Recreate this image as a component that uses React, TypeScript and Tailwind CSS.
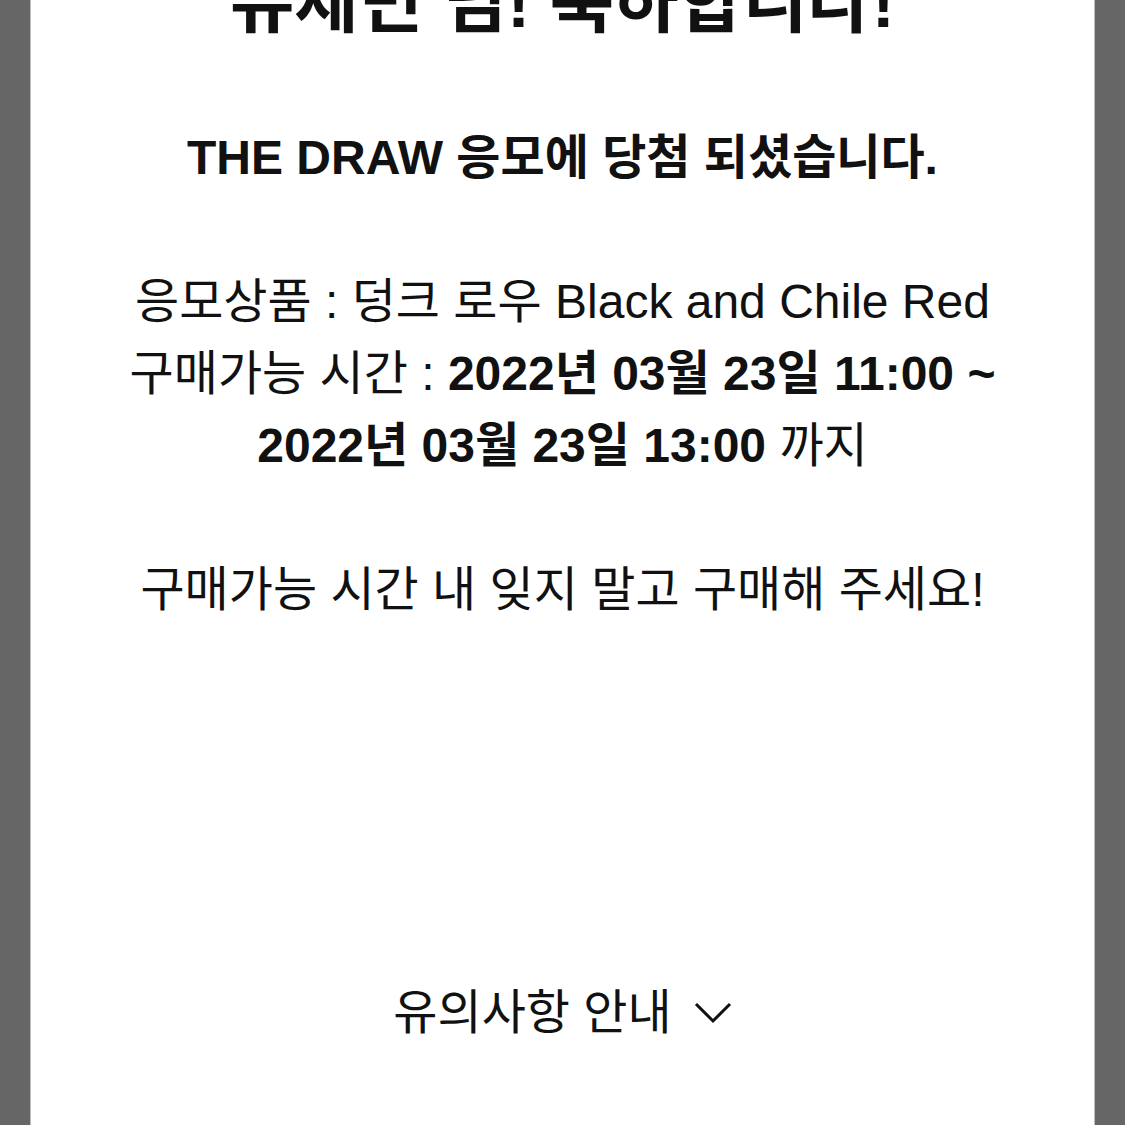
export default function App() {
  return (
    <div className="h-[1125px] overflow-hidden bg-[#666666] px-[30px]">
      <div
        className="flex h-full flex-col items-center border-x border-[#bdbdbd] bg-white text-center text-[#111]"
        style={{ fontFamily: '"Liberation Sans", "Noto Sans CJK KR", sans-serif' }}
      >
        <h1 className="-mt-[42px] whitespace-nowrap text-[70px] font-bold leading-[90px]">유제민 님! 축하합니다!</h1>
        <p className="mt-[74px] text-[48px] font-bold leading-[72px]">THE DRAW 응모에 당첨 되셨습니다.</p>
        <div className="mt-[72px] text-[48px] leading-[72px]">
          <p>응모상품 : 덩크 로우 Black and Chile Red</p>
          <p>
            구매가능 시간 : <strong className="font-bold">2022년 03월 23일 11:00 ~</strong>
          </p>
          <p>
            <strong className="font-bold">2022년 03월 23일 13:00</strong> 까지
          </p>
          <p className="mt-[72px]">구매가능 시간 내 잊지 말고 구매해 주세요!</p>
        </div>
        <button className="mt-[351px] inline-flex items-center gap-[22px] text-[48px] leading-[72px]">
          유의사항 안내
          <svg width="38" height="22" viewBox="0 0 38 22" fill="none" stroke="#111" strokeWidth="3">
            <polyline points="2,2 19,19 36,2" />
          </svg>
        </button>
      </div>
    </div>
  )
}
